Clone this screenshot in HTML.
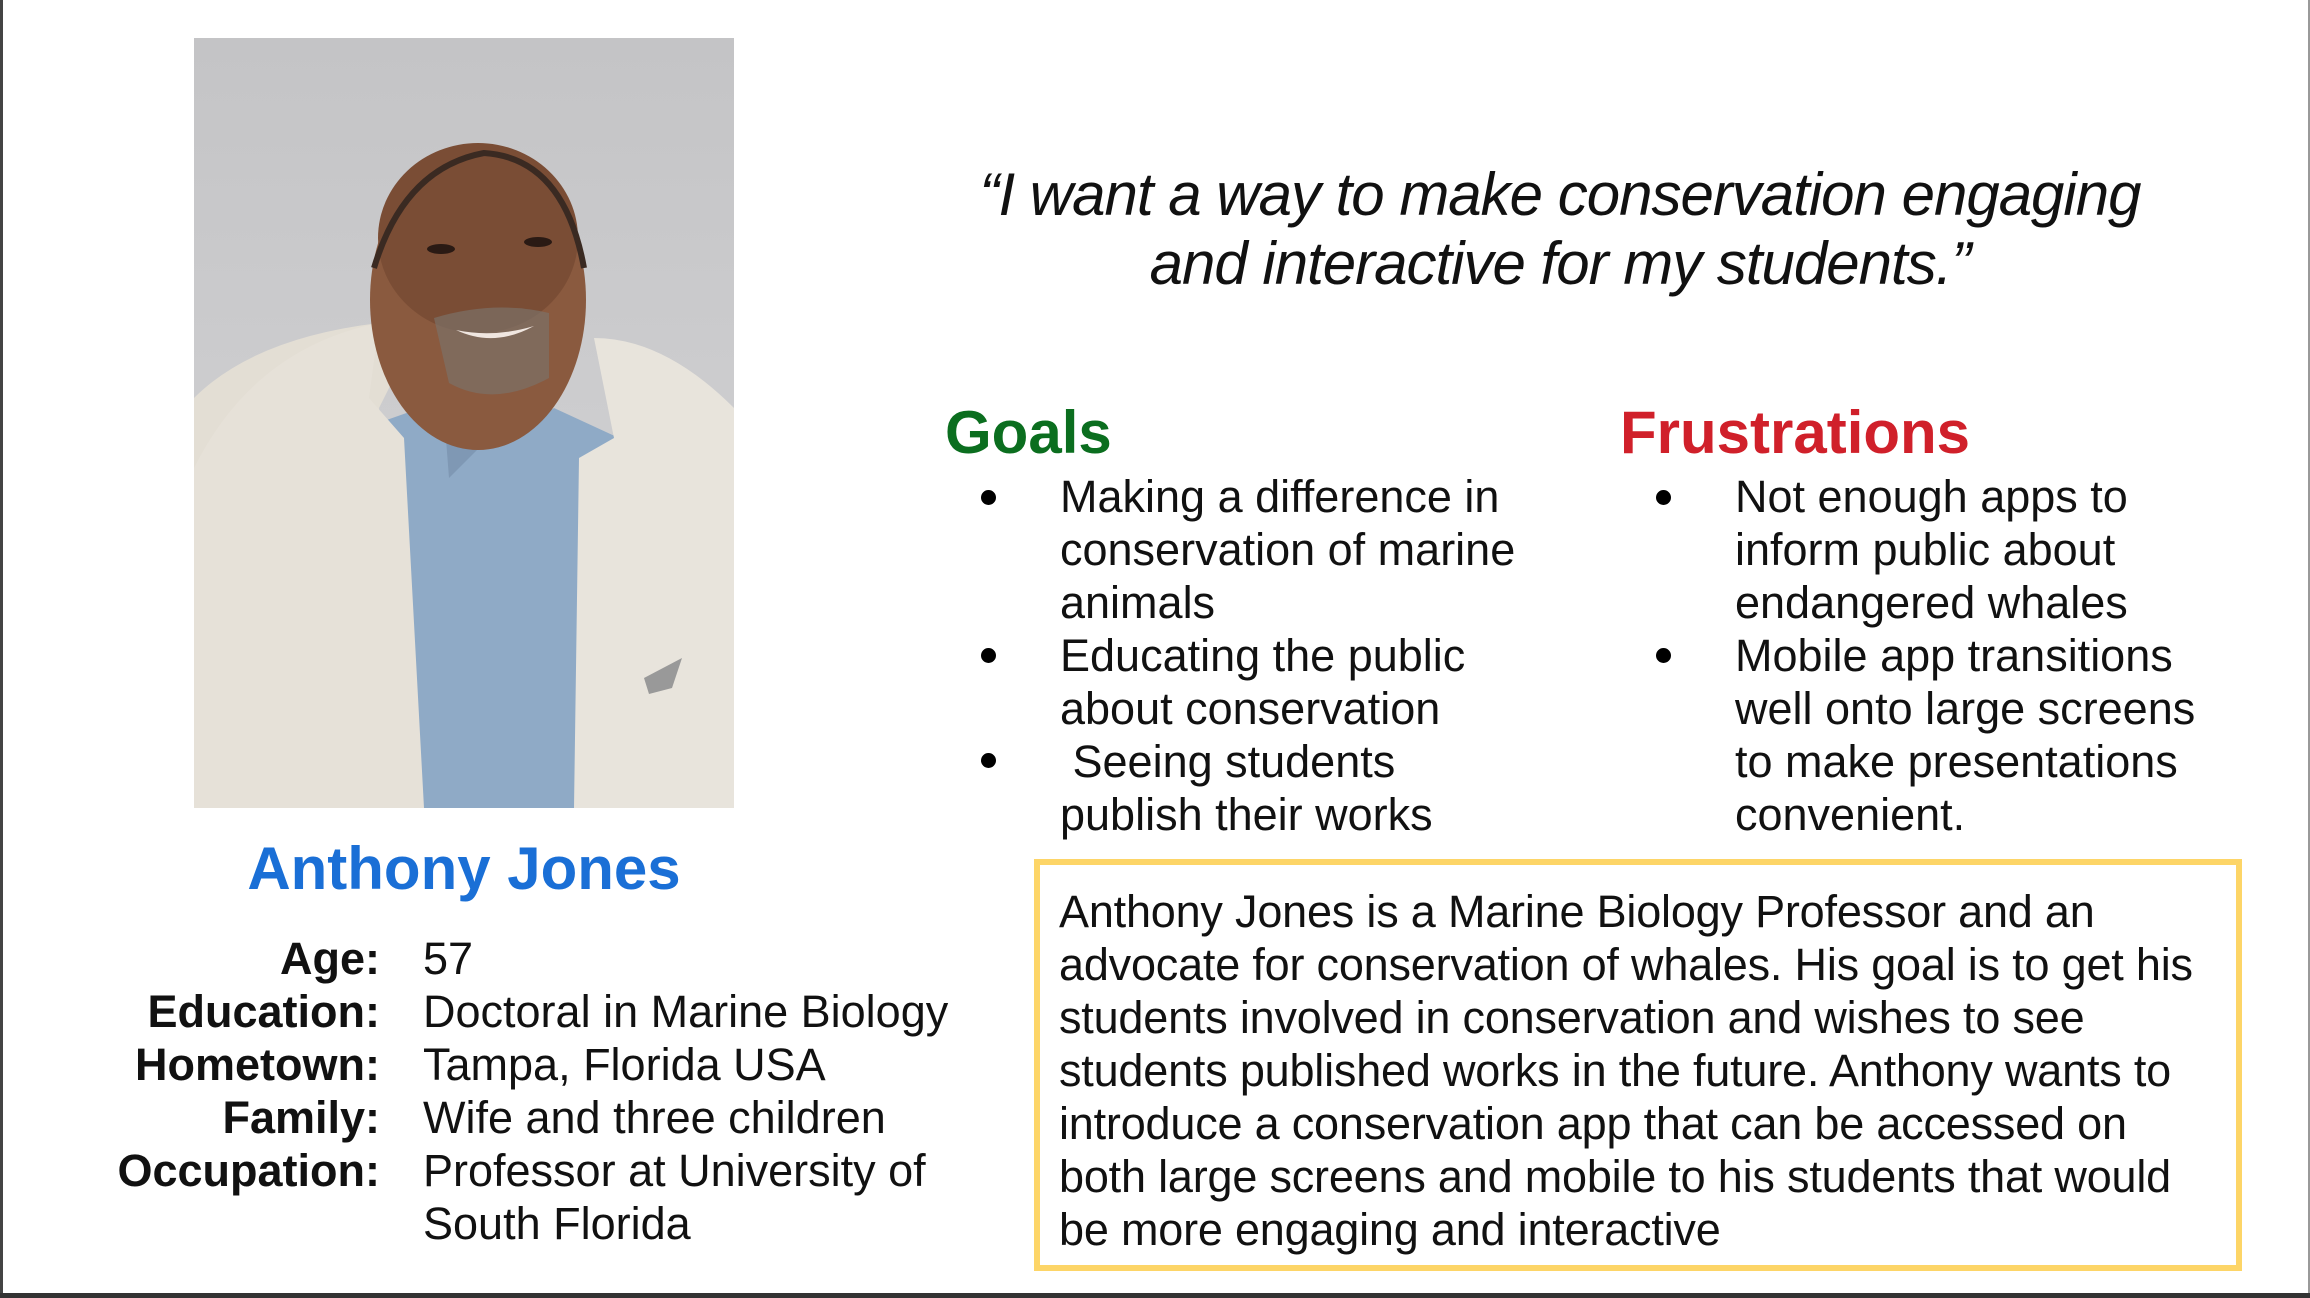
<!DOCTYPE html>
<html><head><meta charset="utf-8"><style>
html,body{margin:0;padding:0}
body{width:2310px;height:1298px;position:relative;overflow:hidden;background:#fff;font-family:"Liberation Sans",sans-serif;color:#111}
.a{position:absolute;white-space:nowrap}
.t{font-size:45px;line-height:53px}
.q{font-style:italic;font-size:60px;line-height:69px;text-align:center;letter-spacing:-1px}
.h{font-weight:bold;font-size:60px;line-height:70px}
.dot{position:absolute;width:15px;height:15px;border-radius:50%;background:#000}
</style></head><body>
<div class="a" style="left:0;top:0;width:3px;height:1298px;background:#444"></div>
<div class="a" style="right:0;top:0;width:2px;height:1298px;background:#999"></div>
<div class="a" style="left:0;bottom:0;width:2310px;height:5px;background:#333"></div>

<svg class="a" style="left:194px;top:38px" width="540" height="770" viewBox="0 0 540 770">
<defs><linearGradient id="bg" x1="0" y1="0" x2="0" y2="1"><stop offset="0" stop-color="#c4c4c6"/><stop offset="1" stop-color="#d6d6d8"/></linearGradient></defs>
<rect width="540" height="770" fill="url(#bg)"/>
<path d="M215 360 L330 360 L345 420 L360 770 L200 770 Z" fill="#9a6b4f"/>
<path d="M170 390 L255 360 L300 410 L360 370 L425 400 L430 770 L170 770 Z" fill="#8faac6"/>
<path d="M0 770 L0 360 Q60 300 185 285 L210 320 L185 370 L220 770 Z" fill="#e3ded4"/>
<path d="M0 430 Q60 310 185 285 L175 360 L210 400 L230 770 L0 770 Z" fill="#e6e1d8"/>
<path d="M540 770 L540 370 Q470 300 400 300 L420 400 L385 420 L380 770 Z" fill="#e8e4dc"/>
<path d="M250 375 L255 440 L300 395 Z" fill="#7f98b4"/>
<ellipse cx="284" cy="262" rx="108" ry="150" fill="#8a5a3f"/>
<ellipse cx="284" cy="200" rx="100" ry="95" fill="#7a4d35"/>
<path d="M180 230 Q210 130 290 115 Q370 120 390 230" fill="none" stroke="#3a2a22" stroke-width="6"/>
<ellipse cx="247" cy="211" rx="14" ry="5" fill="#2a1a14"/>
<ellipse cx="344" cy="204" rx="14" ry="5" fill="#2a1a14"/>
<path d="M240 280 Q300 262 355 275 L355 340 Q300 370 255 345 Z" fill="#7c7068" opacity="0.7"/>
<path d="M262 292 Q300 310 340 288 Q300 300 262 292 Z" fill="#f0e6e0"/>
<path d="M450 640 L488 620 L478 650 L455 656 Z" fill="#999"/>
</svg>

<div class="a q" style="left:900px;top:160px;width:1320px">“I want a way to make conservation engaging<br>and interactive for my students.”</div>

<div class="a h" style="left:945px;top:398px;color:#0b6e1f">Goals</div>
<div class="a h" style="left:1620px;top:398px;color:#d0202a">Frustrations</div>

<div class="dot" style="left:981px;top:490px"></div>
<div class="dot" style="left:981px;top:648px"></div>
<div class="dot" style="left:981px;top:753px"></div>
<div class="a t" style="left:1060px;top:470px">Making a difference in<br>conservation of marine<br>animals<br>Educating the public<br>about conservation<br>&nbsp;Seeing students<br>publish their works</div>

<div class="dot" style="left:1656px;top:490px"></div>
<div class="dot" style="left:1656px;top:648px"></div>
<div class="a t" style="left:1735px;top:470px">Not enough apps to<br>inform public about<br>endangered whales<br>Mobile app transitions<br>well onto large screens<br>to make presentations<br>convenient.</div>

<div class="a" style="left:194px;top:834px;width:540px;text-align:center;font-weight:bold;font-size:60px;line-height:70px;color:#1a6fd6">Anthony Jones</div>

<div class="a t" style="left:60px;top:932px;width:320px;text-align:right;font-weight:bold">Age:<br>Education:<br>Hometown:<br>Family:<br>Occupation:</div>
<div class="a t" style="left:423px;top:932px">57<br>Doctoral in Marine Biology<br>Tampa, Florida USA<br>Wife and three children<br>Professor at University of<br>South Florida</div>

<div class="a" style="left:1034px;top:859px;width:1196px;height:400px;border:6px solid #fdd567"></div>
<div class="a t" style="left:1059px;top:885px;letter-spacing:-0.2px">Anthony Jones is a Marine Biology Professor and an<br>advocate for conservation of whales. His goal is to get his<br>students involved in conservation and wishes to see<br>students published works in the future. Anthony wants to<br>introduce a conservation app that can be accessed on<br>both large screens and mobile to his students that would<br>be more engaging and interactive</div>
</body></html>
